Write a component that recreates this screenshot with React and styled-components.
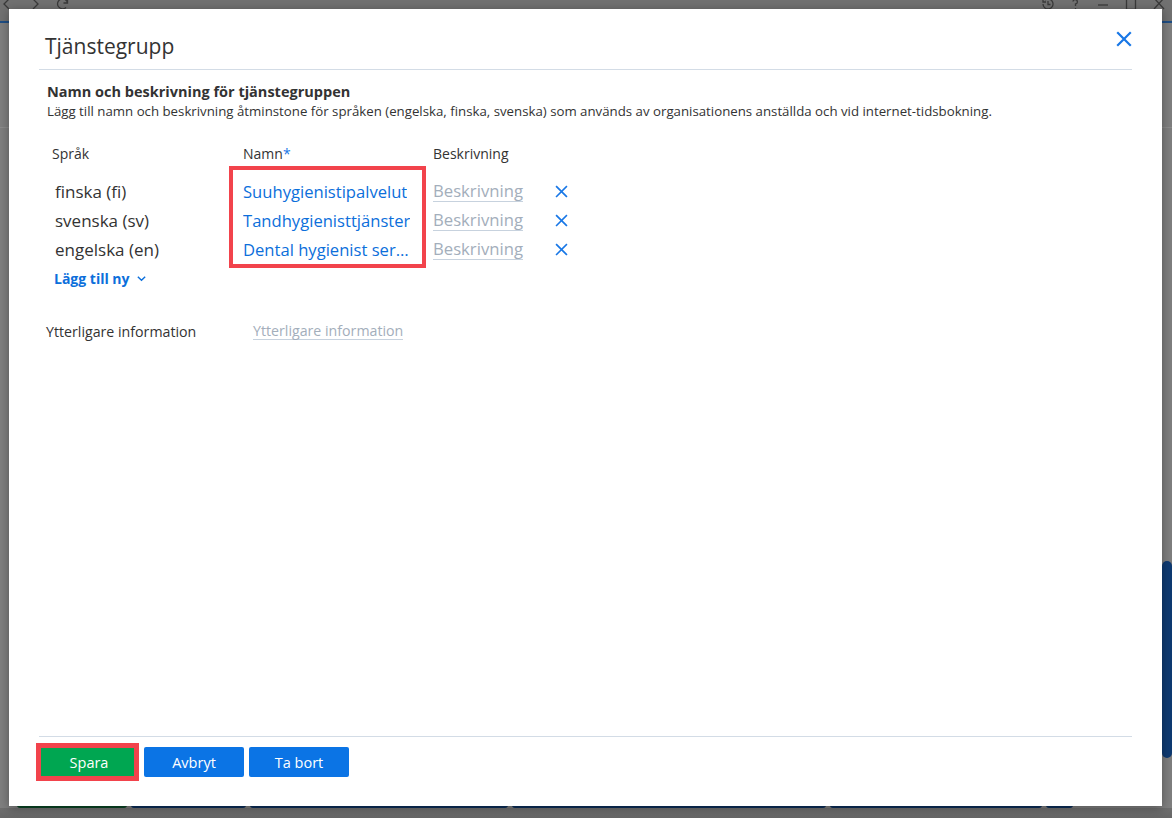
import React from 'react';
import styled, { createGlobalStyle } from 'styled-components';

const GlobalStyle = createGlobalStyle`
    html, body {
        margin:0;
        padding:0;
        width:100%;
        height:100%;
        overflow:hidden;
    }
    body {
        font-family:"Open Sans","Noto Sans",Arial,sans-serif;
        color:#333;
    }
    * {
        box-sizing:border-box;
    }
`;

const languages = [
    { label: 'finska (fi)', name: 'Suuhygienistipalvelut' },
    { label: 'svenska (sv)', name: 'Tandhygienisttjänster' },
    { label: 'engelska (en)', name: 'Dental hygienist services' },
];

const CloseIcon = ({ size = 15, stroke = 2 }) => (
    <svg width={size} height={size} viewBox="0 0 16 16" fill="none">
        <path d="M2 2 L14 14 M14 2 L2 14" stroke="currentColor" strokeWidth={stroke} strokeLinecap="square" />
    </svg>
);

// browser chrome icons, mostly hidden behind the dialog
const chromeIcons = {
    back: <path d="M9 2 L4 7 L9 12" />,
    forward: <path d="M5 2 L10 7 L5 12" />,
    reload: <path d="M11.5 6 A5 5 0 1 0 10 10.5 M11.5 2 V6 H7.5" />,
    history: <path d="M3 7 A5 5 0 1 0 5 3 M3 2 V5 H6 M8 4 V7.5 H10.5" />,
    help: <path d="M5 4.5 A2.2 2.2 0 1 1 7.5 7 V9 M7.5 11 V12" />,
    minimize: <path d="M2 8 H12" />,
    maximize: <path d="M2.5 1.5 H11.5 V12.5 H2.5 Z" />,
    close: <path d="M2 1 L12 12 M12 1 L2 12" />,
};

const ChromeIcon = ({ name }) => (
    <svg width="14" height="14" viewBox="0 0 14 14" fill="none" stroke="#3a3a3a" strokeWidth="1.3">
        {chromeIcons[name]}
    </svg>
);

function App() {
    return (
        <>
            <GlobalStyle />
            <Screen>
                <BrowserBar>
                    <BarGroup>
                        <ChromeIcon name="back" />
                        <ChromeIcon name="forward" />
                        <ChromeIcon name="reload" />
                    </BarGroup>
                    <BarGroup>
                        <ChromeIcon name="history" />
                        <ChromeIcon name="help" />
                        <ChromeIcon name="minimize" />
                        <ChromeIcon name="maximize" />
                        <ChromeIcon name="close" />
                    </BarGroup>
                </BrowserBar>
                <AccentLine />
                <AppHeader />
                <AppMain>
                    <AppCanvas />
                    <Scrollbar>
                        <ScrollThumb />
                    </Scrollbar>
                </AppMain>
                <AppButtons>
                    <AppButton color="#0b4526" width="110px" />
                    <AppButton color="#0c2e59" width="115px" />
                    <AppButton color="#0c2e59" width="258px" />
                    <AppButton color="#0c2e59" width="314px" />
                    <AppButton color="#0c2e59" width="212px" />
                    <AppButton color="#0c2e59" width="27px" />
                </AppButtons>
                <AppFooter />

                <Modal>
                    <ModalHeader>
                        <Title>Tjänstegrupp</Title>
                        <CloseButton>
                            <CloseIcon size={16} stroke={2.2} />
                        </CloseButton>
                    </ModalHeader>
                    <ModalBody>
                        <SectionTitle>Namn och beskrivning för tjänstegruppen</SectionTitle>
                        <SectionText>
                            Lägg till namn och beskrivning åtminstone för språken (engelska, finska, svenska) som används av organisationens anställda och vid internet-tidsbokning.
                        </SectionText>
                        <Table>
                            <Column width="196px">
                                <HeadCell indent="5px">Språk</HeadCell>
                                {languages.map((l) => (
                                    <Cell key={l.label} indent="8px">{l.label}</Cell>
                                ))}
                            </Column>
                            <Column width="190px">
                                <HeadCell>Namn<Required>*</Required></HeadCell>
                                {languages.map((l) => (
                                    <Cell key={l.label}>
                                        <NameValue>{l.name}</NameValue>
                                    </Cell>
                                ))}
                            </Column>
                            <Column width="122px">
                                <HeadCell>Beskrivning</HeadCell>
                                {languages.map((l) => (
                                    <Cell key={l.label}>
                                        <Placeholder>Beskrivning</Placeholder>
                                    </Cell>
                                ))}
                            </Column>
                            <Column width="30px">
                                <HeadCell>&nbsp;</HeadCell>
                                {languages.map((l) => (
                                    <Cell key={l.label}>
                                        <RemoveButton>
                                            <CloseIcon size={13} stroke={2} />
                                        </RemoveButton>
                                    </Cell>
                                ))}
                            </Column>
                            <Highlight />
                        </Table>
                        <AddLink>
                            Lägg till ny
                            <svg width="11" height="11" viewBox="0 0 12 12" fill="none">
                                <path d="M2 4 L6 8 L10 4" stroke="currentColor" strokeWidth="1.5" />
                            </svg>
                        </AddLink>
                        <InfoRow>
                            <InfoLabel>Ytterligare information</InfoLabel>
                            <Placeholder small>Ytterligare information</Placeholder>
                        </InfoRow>
                    </ModalBody>
                    <ModalFooter>
                        <SaveWrap>
                            <Button color="#00a651">Spara</Button>
                            <SaveHighlight />
                        </SaveWrap>
                        <Button color="#0b74e5">Avbryt</Button>
                        <Button color="#0b74e5">Ta bort</Button>
                    </ModalFooter>
                </Modal>
            </Screen>
        </>
    );
}

const Screen = styled.div`
    position:relative;
    width:1172px;
    height:818px;
    display:flex;
    flex-direction:column;
    background:#7f7f7f;
    overflow:hidden;
`;
const BrowserBar = styled.div`
    height:21px;
    background:#717171;
    display:flex;
    justify-content:space-between;
    align-items:flex-start;
    padding:0 6px 0 0;
`;
const BarGroup = styled.div`
    display:flex;
    gap:14px;
    margin-top:-3px;
`;
const AccentLine = styled.div`
    height:2px;
    background:#1f4e85;
`;
const AppHeader = styled.div`
    height:105px;
    border-bottom:1px solid #8c8c8c;
`;
const AppMain = styled.div`
    flex:1;
    display:flex;
`;
const AppCanvas = styled.div`
    flex:1;
`;
const Scrollbar = styled.div`
    width:10px;
    display:flex;
    flex-direction:column;
`;
const ScrollThumb = styled.div`
    margin-top:433px;
    height:197px;
    background:#0e3a72;
    border-radius:5px;
`;
const AppButtons = styled.div`
    display:flex;
    gap:4px;
    padding-left:17px;
    height:16px;
    margin-top:-20px;
`;
const AppButton = styled.div`
    width:${(p) => p.width};
    background:${(p) => p.color};
    border-radius:3px;
`;
const AppFooter = styled.div`
    height:10px;
    background:linear-gradient(#6f6f6f,#666);
`;

const Modal = styled.div`
    position:absolute;
    left:9px;
    top:9px;
    width:1153px;
    height:797px;
    background:#fff;
    box-shadow:0 2px 10px rgba(0,0,0,0.35);
    display:flex;
    flex-direction:column;
    padding:0 30px;
`;
const ModalHeader = styled.div`
    height:61px;
    display:flex;
    justify-content:space-between;
    align-items:flex-start;
    border-bottom:1px solid #d3dce6;
`;
const Title = styled.h1`
    margin:23px 0 0 6px;
    font-size:21px;
    font-weight:400;
    line-height:28px;
    color:#333;
`;
const CloseButton = styled.button`
    margin-top:22px;
    border:none;
    background:none;
    padding:0;
    color:#1877e6;
    display:flex;
    cursor:pointer;
`;
const ModalBody = styled.div`
    flex:1;
    padding:12px 8px 0;
`;
const SectionTitle = styled.h2`
    margin:0;
    font-size:14.5px;
    line-height:20px;
    font-weight:700;
    color:#333;
`;
const SectionText = styled.p`
    margin:0;
    font-size:13.25px;
    line-height:18px;
    color:#333;
`;
const Table = styled.div`
    position:relative;
    display:flex;
    margin-top:24px;
`;
const Column = styled.div`
    width:${(p) => p.width};
    display:flex;
    flex-direction:column;
`;
const HeadCell = styled.div`
    height:20px;
    line-height:20px;
    font-size:14px;
    color:#333;
    padding-left:${(p) => p.indent || '0'};
    margin-bottom:13px;
`;
const Required = styled.span`
    color:#1877e6;
`;
const Cell = styled.div`
    height:29px;
    display:flex;
    align-items:center;
    font-size:17px;
    color:#333;
    padding-left:${(p) => p.indent || '0'};
`;
const NameValue = styled.span`
    display:block;
    max-width:172px;
    font-size:16.6px;
    color:#0c6fdb;
    white-space:nowrap;
    overflow:hidden;
    text-overflow:ellipsis;
`;
const Placeholder = styled.span`
    color:#a3aebb;
    font-size:${(p) => (p.small ? '14.2px' : '16.7px')};
    line-height:1.25;
    border-bottom:1px solid #c7d2de;
`;
const RemoveButton = styled.button`
    border:none;
    background:none;
    padding:0;
    color:#1877e6;
    display:flex;
`;
const Highlight = styled.div`
    position:absolute;
    left:182px;
    top:22px;
    width:197px;
    height:102px;
    border:4px solid #f2434c;
    pointer-events:none;
`;
const AddLink = styled.a`
    display:flex;
    align-items:center;
    gap:6px;
    margin:4px 0 0 7px;
    height:20px;
    font-size:14px;
    font-weight:700;
    color:#0c6fdb;
`;
const InfoRow = styled.div`
    display:flex;
    align-items:center;
    margin:33px 0 0 -1px;
    height:20px;
`;
const InfoLabel = styled.span`
    width:207px;
    font-size:14.2px;
    color:#333;
`;
const ModalFooter = styled.div`
    border-top:1px solid #d3dce6;
    display:flex;
    gap:5px;
    padding:10px 0 29px;
`;
const SaveWrap = styled.div`
    position:relative;
    display:flex;
`;
const SaveHighlight = styled.div`
    position:absolute;
    left:-3px;
    top:-4px;
    right:0;
    bottom:-4px;
    border:5px solid #f2434c;
    pointer-events:none;
`;
const Button = styled.button`
    width:100px;
    height:30px;
    border:none;
    border-radius:2px;
    background:${(p) => p.color};
    color:#fff;
    font-family:inherit;
    font-size:14.5px;
    cursor:pointer;
`;

export default App;
